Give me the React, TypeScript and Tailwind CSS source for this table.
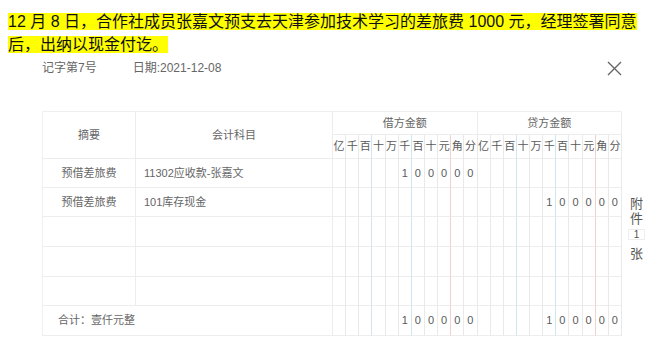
import React from "react";

const GRAY = "border-r-[#e9e9e9]";
const BLUE = "border-r-[#cfe6f1]";
const RED = "border-r-[#f1d0d0]";

function lineColor(i: number): string {
  const k = i % 11;
  if (k === 2 || k === 5) return BLUE;
  if (k === 8) return RED;
  return GRAY;
}

const LABELS = ["亿", "千", "百", "十", "万", "千", "百", "十", "元", "角", "分"];
const AMT = ["", "", "", "", "", "1", "0", "0", "0", "0", "0"];
const EMPTY = Array(11).fill("");

type Row = { summary: string; subject: string; debit: string[]; credit: string[] };

const rows: Row[] = [
  { summary: "预借差旅费", subject: "11302应收款-张嘉文", debit: AMT, credit: EMPTY },
  { summary: "预借差旅费", subject: "101库存现金", debit: EMPTY, credit: AMT },
  { summary: "", subject: "", debit: EMPTY, credit: EMPTY },
  { summary: "", subject: "", debit: EMPTY, credit: EMPTY },
  { summary: "", subject: "", debit: EMPTY, credit: EMPTY },
];

function DigitCells({ digits, keyPrefix }: { digits: string[]; keyPrefix: string }) {
  return (
    <>
      {digits.map((d, i) => (
        <div
          key={keyPrefix + i}
          className={`flex items-center justify-center border-b border-r border-b-[#ededed] ${lineColor(i)} text-[11px] text-[#5a5a5a]`}
        >
          {d}
        </div>
      ))}
    </>
  );
}

export default function App() {
  return (
    <div
      className="relative h-[346px] w-[660px] overflow-hidden bg-white"
      style={{ fontFamily: '"Liberation Sans", "Noto Sans CJK SC", sans-serif' }}
    >
      <div className="pl-[8px] pt-[10px] text-[16px] leading-[23px] text-[#111]">
        <div className="whitespace-nowrap">
          <span className="bg-[#ffff00]">12 月 8 日，合作社成员张嘉文预支去天津参加技术学习的差旅费 1000 元，经理签署同意</span>
        </div>
        <div className="whitespace-nowrap">
          <span className="bg-[#ffff00]">后，出纳以现金付讫。</span>
        </div>
      </div>

      <div className="mt-[2px] flex h-[20px] items-center pl-[42px] pr-[38px] text-[12px] text-[#666]">
        <span>记字第7号</span>
        <span className="ml-[36px]">日期:2021-12-08</span>
        <svg className="ml-auto" width="15" height="15" viewBox="0 0 15 15">
          <path d="M1 1 L14 14 M14 1 L1 14" stroke="#666" strokeWidth="1.4" fill="none" />
        </svg>
      </div>

      <div className="mt-[33px] flex items-start pl-[42px]">
        <div className="grid w-[580px] grid-cols-[93px_197px_repeat(22,minmax(0,1fr))] grid-rows-[23px_24px_29px_29px_30px_30px_29px_30px] border-l border-t border-[#efefef] text-[#666]">
          <div className="row-span-2 flex items-center justify-center border-b border-r border-[#ececec] text-[11px]">摘要</div>
          <div className="row-span-2 flex items-center justify-center border-b border-r border-[#ececec] text-[11px]">会计科目</div>
          <div className="col-span-11 flex items-center justify-center border-b border-r border-[#ececec] text-[11px]">借方金额</div>
          <div className="col-span-11 flex items-center justify-center border-b border-r border-[#ececec] text-[11px]">贷方金额</div>
          {[...LABELS, ...LABELS].map((l, i) => (
            <div
              key={"l" + i}
              className={`flex items-center justify-center border-b border-r border-b-[#ededed] ${lineColor(i)} text-[11px] text-[#5a5a5a]`}
            >
              {l}
            </div>
          ))}
          {rows.map((r, ri) => (
            <React.Fragment key={"r" + ri}>
              <div className="flex items-center justify-center border-b border-r border-[#ededed] text-[11px]">{r.summary}</div>
              <div className="flex items-center border-b border-r border-[#ededed] pl-[8px] text-[11px]">{r.subject}</div>
              <DigitCells digits={r.debit} keyPrefix={"d" + ri + "-"} />
              <DigitCells digits={r.credit} keyPrefix={"c" + ri + "-"} />
            </React.Fragment>
          ))}
          <div className="col-span-2 flex items-center border-b border-r border-[#ededed] pl-[15px] text-[11px]">合计：壹仟元整</div>
          <DigitCells digits={AMT} keyPrefix="fd" />
          <DigitCells digits={AMT} keyPrefix="fc" />
        </div>

        <div className="ml-[6px] mt-[85px] flex flex-col items-center text-[13px] text-[#555]">
          <div className="h-[15px] leading-[15px]">附</div>
          <div className="h-[15px] leading-[15px]">件</div>
          <div className="mt-[3px] flex h-[11px] w-[17px] items-center justify-center border border-[#eee] text-[10px] leading-[10px]">1</div>
          <div className="mt-[6px] h-[15px] leading-[15px]">张</div>
        </div>
      </div>
    </div>
  );
}
